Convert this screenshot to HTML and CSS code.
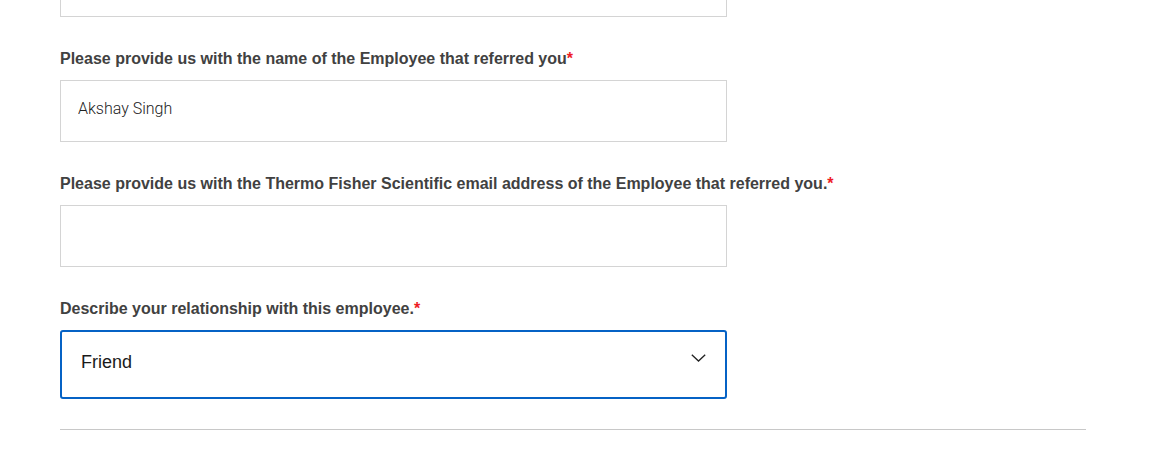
FILE: index.html
```html
<!DOCTYPE html>
<html lang="en">
<head>
<meta charset="utf-8">
<title>Referral form</title>
<link rel="stylesheet" href="styles.css">
</head>
<body>
<form class="form">
  <div class="field field-cut">
    <input class="text-input" type="text" aria-label="Previous field">
  </div>
  <div class="field">
    <label class="label" for="emp-name">Please provide us with the name of the Employee that referred you<span class="req">*</span></label>
    <input class="text-input" id="emp-name" type="text" value="Akshay Singh">
  </div>
  <div class="field">
    <label class="label" for="emp-email">Please provide us with the Thermo Fisher Scientific email address of the Employee that referred you.<span class="req">*</span></label>
    <input class="text-input" id="emp-email" type="text">
  </div>
  <div class="field">
    <label class="label" for="relation">Describe your relationship with this employee.<span class="req">*</span></label>
    <div class="select">
      <span class="select-value" id="relation">Friend</span>
      <svg class="chevron" width="15" height="8" viewBox="0 0 15 8" aria-hidden="true"><path d="M0.8 0.8l6.7 6.2 6.7-6.2" fill="none" stroke="#222" stroke-width="1.3"/></svg>
    </div>
  </div>
  <hr class="divider">
</form>
</body>
</html>
```
FILE: styles.css
```css
html, body {
  margin: 0;
  padding: 0;
  background: #fff;
}
body {
  font-family: "Liberation Sans", Arial, Helvetica, sans-serif;
  overflow: hidden;
}
.form {
  padding-left: 60px;
  display: flex;
  flex-direction: column;
}
.field {
  display: flex;
  flex-direction: column;
  margin-bottom: 30px;
}
.field-cut {
  margin-top: -45px;
}
.label {
  font-size: 16px;
  line-height: 22px;
  font-weight: 700;
  color: #414141;
  margin-top: 1px;
  margin-bottom: 10px;
}
.req {
  color: #ee1c25;
}
.text-input {
  box-sizing: border-box;
  width: 667px;
  height: 62px;
  border: 1px solid #d4d4d4;
  border-radius: 0;
  padding: 0 17px 6px 17px;
  margin: 0;
  font-family: Roboto, "Liberation Sans", Arial, sans-serif;
  font-weight: 300;
  font-size: 16px;
  color: #222;
  outline: none;
  background: #fff;
}
.select {
  box-sizing: border-box;
  width: 667px;
  height: 69px;
  border: 2px solid #0562c5;
  border-radius: 3px;
  display: flex;
  align-items: flex-start;
  justify-content: space-between;
  padding: 0 19px 0 19px;
}
.select-value {
  font-size: 18px;
  line-height: 22px;
  margin-top: 19px;
  color: #1a1a1a;
}
.chevron {
  display: block;
  margin-top: 22px;
}
.divider {
  width: 1026px;
  margin: 0;
  border: 0;
  border-top: 1px solid #c8c8c8;
}
```
